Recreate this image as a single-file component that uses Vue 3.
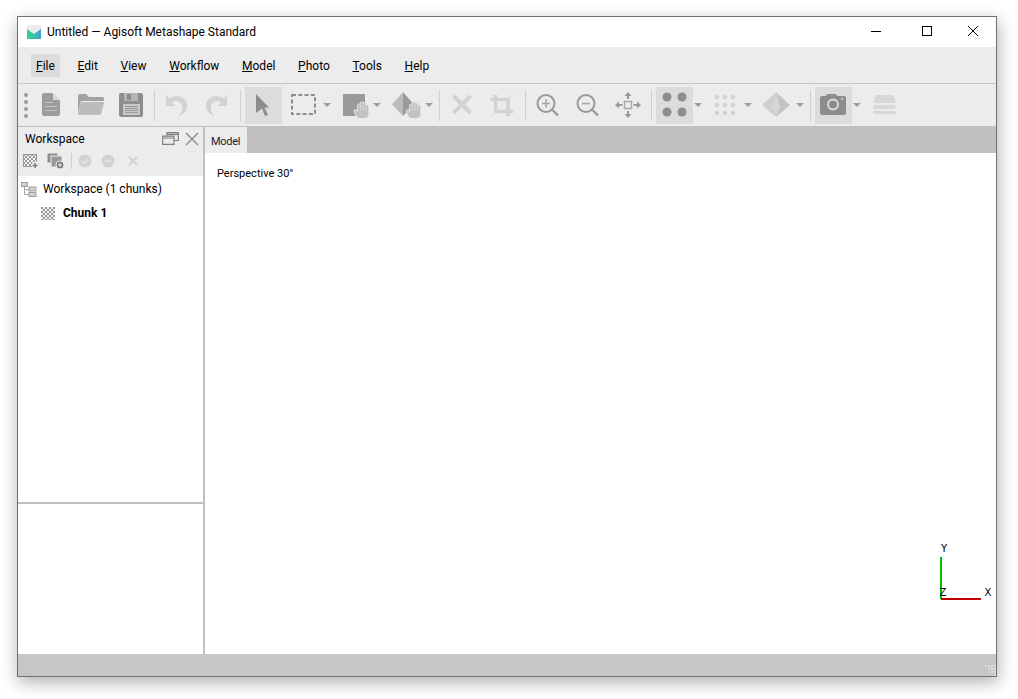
<script setup>
const menus = [
  { key: 'F', rest: 'ile' },
  { key: 'E', rest: 'dit' },
  { key: 'V', rest: 'iew' },
  { key: 'W', rest: 'orkflow' },
  { key: 'M', rest: 'odel' },
  { key: 'P', rest: 'hoto' },
  { key: 'T', rest: 'ools' },
  { key: 'H', rest: 'elp' }
]
const gridDots = []
for (const x of [11, 19, 27]) {
  for (const y of [10, 18, 26]) gridDots.push({ x, y })
}
const gripDots = [[11, 11], [8, 8], [11, 8], [5, 5], [8, 5], [11, 5], [2, 2], [5, 2], [8, 2], [11, 2]]
</script>

<template>
  <div class="page">
  <div class="window">
    <header class="titlebar">
      <svg class="logo" width="16" height="16" viewBox="0 0 16 16">
        <defs>
          <linearGradient id="lg" x1="0" x2="1" y1="0" y2="0">
            <stop offset="0" stop-color="#2fd08a" />
            <stop offset="0.55" stop-color="#38c0a8" />
            <stop offset="1" stop-color="#3f9fdc" />
          </linearGradient>
          <pattern id="chk" width="4" height="4" patternUnits="userSpaceOnUse">
            <rect width="4" height="4" fill="#f0f0f0" />
            <rect width="2" height="2" fill="#9a9a9a" />
            <rect x="2" y="2" width="2" height="2" fill="#9a9a9a" />
          </pattern>
        </defs>
        <rect x="1" y="1" width="14" height="14" fill="#ececec" />
        <path d="M1 5 L8 10 L15 5 V15 H1 Z" fill="url(#lg)" />
      </svg>
      <span class="title">Untitled — Agisoft Metashape Standard</span>
      <div class="controls">
        <svg width="46" height="30"><path d="M0 14.500H10" transform="translate(13 0)" stroke="#000" /></svg>
        <svg width="46" height="30"><rect x="18.500" y="9.500" width="9" height="9" fill="none" stroke="#000" /></svg>
        <svg width="46" height="30"><path d="M18 9L28 19M28 9L18 19" stroke="#000" /></svg>
      </div>
    </header>

    <nav class="menubar">
      <span v-for="(m, i) in menus" :key="m.key" class="menu" :class="{ hover: i === 0 }"><u>{{ m.key }}</u>{{ m.rest }}</span>
    </nav>

    <div class="toolbar">
      <div class="grip"><i></i><i></i><i></i><i></i></div>

      <div class="btn">
        <svg viewBox="0 0 37 37">
          <path d="M12 6H20L28 14V27a2 2 0 0 1-2 2H12a2 2 0 0 1-2-2V8a2 2 0 0 1 2-2Z" fill="#9c9c9c" />
          <path d="M21 6L28 13H21Z" fill="#d8d8d8" />
          <path d="M13 15.500H21M13 19.500H25M13 23.500H25" stroke="#c4c4c4" />
        </svg>
      </div>
      <div class="btn">
        <svg viewBox="0 0 37 37">
          <path d="M6 9a2 2 0 0 1 2-2H14L17 10H30a2 2 0 0 1 2 2V14H9L6 26Z" fill="#a2a2a2" />
          <path d="M9 15H31a1 1 0 0 1 1 1L29 27a1.500 1.500 0 0 1-1.500 1H7a1 1 0 0 1-1-1Z" fill="#bcbcbc" />
        </svg>
      </div>
      <div class="btn">
        <svg viewBox="0 0 37 37">
          <rect x="7" y="6" width="24" height="24" rx="2" fill="#8e8e8e" />
          <rect x="12" y="6" width="14" height="8" fill="#b4b4b4" />
          <rect x="15" y="7" width="4" height="6" fill="#8a8a8a" />
          <rect x="11" y="17" width="17" height="11" fill="#c8c8c8" />
          <path d="M13 19.500H26M13 21.500H26M13 23.500H26M13 25.500H26" stroke="#8e8e8e" stroke-width="0.800" />
        </svg>
      </div>
      <div class="sep"></div>
      <div class="btn">
        <svg viewBox="0 0 37 37">
          <path d="M9 8L9 19L19 19L15 15.500C18 13 22.500 14 24.500 17.500C26.500 21 25 25.500 21 29C27 27.500 30.500 23 30 18C29.500 12 24 8.500 19 9C16 9.300 14 10.500 12.500 11.500Z" fill="#d2d2d2" />
        </svg>
      </div>
      <div class="btn">
        <svg viewBox="0 0 37 37">
          <g transform="matrix(-1 0 0 1 39 0)">
            <path d="M9 8L9 19L19 19L15 15.500C18 13 22.500 14 24.500 17.500C26.500 21 25 25.500 21 29C27 27.500 30.500 23 30 18C29.500 12 24 8.500 19 9C16 9.300 14 10.500 12.500 11.500Z" fill="#d2d2d2" />
          </g>
        </svg>
      </div>
      <div class="sep wide"></div>
      <div class="btn active">
        <svg viewBox="0 0 37 37">
          <path d="M11 7L24 20.500H19.500L23 28L20 29L17 21.500L11 26Z" fill="#8c8c8c" />
        </svg>
      </div>
      <div class="btn">
        <svg viewBox="0 0 37 37">
          <rect x="7" y="8" width="23" height="19" fill="none" stroke="#8e8e8e" stroke-width="2" stroke-dasharray="4 2.300" />
        </svg>
      </div>
      <div class="drop"></div>
      <div class="btn">
        <svg viewBox="0 0 37 37">
          <rect x="8" y="7" width="22" height="22" fill="#9a9a9a" />
          <path class="hand" d="M23 31C21 28 20 26 19.500 24.500C19 23 21 22.500 22 24L23 25V18.500a1.300 1.300 0 0 1 2.600 0V16.500a1.300 1.300 0 0 1 2.600 0V17.500a1.300 1.300 0 0 1 2.600 0V19.500a1.300 1.300 0 0 1 2.600 0V27C33.400 29.500 32 31 30 31Z" />
          <path d="M25.600 18V24M28.200 18V24M30.800 19.500V24" stroke="#e4e4e4" stroke-width="0.700" />
        </svg>
      </div>
      <div class="drop extra"></div>
      <div class="btn">
        <svg viewBox="0 0 37 37">
          <path d="M16 5L5 17.500L16 29Z" fill="#bcbcbc" />
          <path d="M16 5L27 17.500L16 29Z" fill="#9a9a9a" />
          <path class="hand" d="M23 31C21 28 20 26 19.500 24.500C19 23 21 22.500 22 24L23 25V18.500a1.300 1.300 0 0 1 2.600 0V16.500a1.300 1.300 0 0 1 2.600 0V17.500a1.300 1.300 0 0 1 2.600 0V19.500a1.300 1.300 0 0 1 2.600 0V27C33.400 29.500 32 31 30 31Z" />
          <path d="M25.600 18V24M28.200 18V24M30.800 19.500V24" stroke="#e4e4e4" stroke-width="0.700" />
        </svg>
      </div>
      <div class="drop"></div>
      <div class="sep mid"></div>
      <div class="btn">
        <svg viewBox="0 0 37 37">
          <path d="M10.500 9L27.500 26M27.500 9L10.500 26" stroke="#d2d2d2" stroke-width="4" />
        </svg>
      </div>
      <div class="btn">
        <svg viewBox="0 0 37 37">
          <path d="M12.500 8V24.500H30M7.500 12.500H25V29" fill="none" stroke="#d2d2d2" stroke-width="3.500" />
          <path d="M8 29L30 7" stroke="#d8d8d8" stroke-width="0.800" />
        </svg>
      </div>
      <div class="sep"></div>
      <div class="btn">
        <svg viewBox="0 0 37 37">
          <circle cx="18" cy="16.500" r="8.500" fill="none" stroke="#999" stroke-width="2" />
          <path d="M24.500 23L30 28.500" stroke="#999" stroke-width="2.400" />
          <path d="M14 16.500H22M18 12.500V20.500" stroke="#a8a8a8" stroke-width="1.600" />
        </svg>
      </div>
      <div class="btn">
        <svg viewBox="0 0 37 37">
          <circle cx="18" cy="16.500" r="8.500" fill="none" stroke="#999" stroke-width="2" />
          <path d="M24.500 23L30 28.500" stroke="#999" stroke-width="2.400" />
          <path d="M14 16.500H22" stroke="#a8a8a8" stroke-width="1.600" />
        </svg>
      </div>
      <div class="btn">
        <svg viewBox="0 0 37 37">
          <g transform="translate(1 0)">
            <rect x="15.500" y="14.500" width="7" height="7" fill="none" stroke="#aaa" stroke-width="1.500" />
            <path d="M19 5L15.500 9H18V12H20V9H22.500ZM19 31L15.500 27H18V24H20V27H22.500ZM6 18L10 14.500V17H13.500V19H10V21.500ZM32 18L28 14.500V17H24.500V19H28V21.500Z" fill="#999" />
          </g>
        </svg>
      </div>
      <div class="sep wide"></div>
      <div class="btn active">
        <svg viewBox="0 0 37 37">
          <circle cx="11" cy="10" r="4.500" fill="#8e8e8e" />
          <circle cx="26" cy="10" r="4.500" fill="#8e8e8e" />
          <circle cx="11" cy="25" r="4.500" fill="#8e8e8e" />
          <circle cx="26" cy="25" r="4.500" fill="#8e8e8e" />
        </svg>
      </div>
      <div class="drop"></div>
      <div class="btn">
        <svg viewBox="0 0 37 37">
          <circle v-for="d in gridDots" :key="d.x + '-' + d.y" :cx="d.x" :cy="d.y" r="2.300" fill="#d2d2d2" />
        </svg>
      </div>
      <div class="drop extra"></div>
      <div class="btn">
        <svg viewBox="0 0 37 37">
          <path d="M18 5L4 18L18 30Z" fill="#cfcfcf" />
          <path d="M18 5L32 18L18 30Z" fill="#c4c4c4" />
          <path d="M18 5L14 20L18 30L22 20Z" fill="#d6d6d6" />
        </svg>
      </div>
      <div class="drop"></div>
      <div class="sep last"></div>
      <div class="btn active">
        <svg viewBox="0 0 37 37">
          <path d="M5 11a2 2 0 0 1 2-2H10.500L12.500 7H20.500L22.500 9H29a2 2 0 0 1 2 2V26a2 2 0 0 1-2 2H7a2 2 0 0 1-2-2Z" fill="#8c8c8c" />
          <circle cx="18" cy="17.500" r="5" fill="none" stroke="#e0e0e0" stroke-width="1.800" />
          <circle cx="27" cy="12" r="1" fill="#e0e0e0" />
        </svg>
      </div>
      <div class="drop"></div>
      <div class="btn">
        <svg viewBox="0 0 37 37">
          <path d="M11 8H28L31 16H8Z" fill="#d8d8d8" />
          <path d="M9 18H30L31 22H8Z" fill="#d8d8d8" />
          <path d="M8 24H31V27H8Z" fill="#d8d8d8" />
        </svg>
      </div>
    </div>

    <main class="main">
      <aside class="sidebar">
        <div class="workspace">
          <div class="panel-head">
            <div class="panel-title">
              <span>Workspace</span>
              <svg class="head-ico" width="17" height="13" viewBox="0 0 17 13">
                <path d="M5 3.500V0.700H16.300V8.500H12.500M0.700 4.200H12V12.300H0.700ZM0.700 6H12M5 2.300H16.300" fill="none" stroke="#808080" stroke-width="1.200" />
              </svg>
              <svg class="head-ico close" width="14" height="14" viewBox="0 0 14 14">
                <path d="M1 1L13 13M13 1L1 13" stroke="#8a8a8a" stroke-width="1.400" />
              </svg>
            </div>
            <div class="panel-tools">
              <svg width="16" height="15" viewBox="0 0 16 15">
                <rect x="0.500" y="0.500" width="13" height="12" fill="url(#chk)" stroke="#999" />
                <circle cx="12" cy="11" r="3.500" fill="#ececec" />
                <path d="M9.500 11.500H14.500M12 9V14" stroke="#777" stroke-width="1.400" />
              </svg>
              <svg class="tool2" width="17" height="16" viewBox="0 0 17 16">
                <rect x="0.500" y="0.500" width="10" height="9" fill="#8e8e8e" />
                <rect x="4" y="3" width="11" height="11" fill="#9a9a9a" stroke="#ececec" />
                <circle cx="13" cy="12" r="4" fill="#777" stroke="#ececec" />
                <path d="M11 12H15M13 10V14" stroke="#ececec" stroke-width="1.200" />
              </svg>
              <i class="tool-sep"></i>
              <svg class="tool3" width="14" height="14" viewBox="0 0 14 14">
                <circle cx="7" cy="7" r="6.500" fill="#d2d2d2" />
                <path d="M4 7L6.200 9.500L10 4.500" fill="none" stroke="#e6e6e6" stroke-width="1.300" />
              </svg>
              <svg class="tool4" width="14" height="14" viewBox="0 0 14 14">
                <circle cx="7" cy="7" r="6.500" fill="#d2d2d2" />
                <path d="M3.500 7H10.500" stroke="#e6e6e6" stroke-width="1.500" />
              </svg>
              <svg class="tool5" width="12" height="12" viewBox="0 0 12 12">
                <path d="M2 2L10 10M10 2L2 10" stroke="#d2d2d2" stroke-width="2.200" />
              </svg>
            </div>
          </div>
          <ul class="tree">
            <li class="node root">
              <svg width="16" height="15" viewBox="0 0 16 15">
                <path d="M3.500 4V12.500H8M3.500 7.500H8" fill="none" stroke="#a8a8a8" />
                <rect x="0.500" y="0.500" width="6" height="4" fill="#d0d0d0" stroke="#a0a0a0" />
                <rect x="8" y="5" width="7" height="4" fill="#d0d0d0" stroke="#a0a0a0" />
                <rect x="8" y="10.500" width="7" height="4" fill="#d0d0d0" stroke="#a0a0a0" />
              </svg>
              <span>Workspace (1 chunks)</span>
            </li>
            <li class="node chunk">
              <svg width="14" height="13" viewBox="0 0 14 13">
                <rect width="14" height="13" fill="url(#chk)" />
              </svg>
              <b>Chunk 1</b>
            </li>
          </ul>
        </div>
        <div class="lower"></div>
      </aside>

      <section class="view">
        <div class="tabs"><span class="tab">Model</span></div>
        <div class="canvas">
          <span class="persp">Perspective 30°</span>
          <svg class="axes" width="60" height="70" viewBox="0 0 60 70">
            <rect x="5" y="17" width="2" height="42" fill="#00c000" />
            <rect x="6" y="58" width="40" height="2" fill="#c00000" />
            <text x="9" y="12" class="ax">Y</text>
            <text x="8" y="56" class="ax">Z</text>
            <text x="53" y="56" class="ax">X</text>
          </svg>
        </div>
      </section>
    </main>

    <footer class="statusbar">
      <svg class="sizegrip" width="13" height="13" viewBox="0 0 13 13">
        <rect v-for="d in gripDots" :key="d[0] + '_' + d[1]" :x="d[0]" :y="d[1]" width="2" height="2" fill="#e0e0e0" />
      </svg>
    </footer>
  </div>
  </div>
</template>

<style scoped>
.page {
  height: 699px;
  padding: 16px 0 0 17px;
  box-sizing: border-box;
  overflow: hidden;
}
.window {
  box-sizing: border-box;
  width: 980px;
  height: 661px;
  border: 1px solid #707070;
  background: #fff;
  display: flex;
  flex-direction: column;
  box-shadow: 1px 5px 16px rgba(0, 0, 0, 0.32);
  font-family: Roboto, "Noto Sans", sans-serif;
  font-size: 12px;
  color: #000;
}
.titlebar {
  height: 30px;
  flex: none;
  display: flex;
  align-items: center;
  background: #fff;
}
.logo { margin-left: 8px; }
.title { margin-left: 5px; }
.controls { margin-left: auto; display: flex; margin-right: 0; }
.controls svg { display: block; }

.menubar {
  height: 37px;
  flex: none;
  box-sizing: border-box;
  background: #ececec;
  border-bottom: 1px solid #c6c6c6;
  display: flex;
  align-items: center;
  padding-left: 13px;
}
.menu {
  padding: 4px 5px 2px;
  height: 23px;
  box-sizing: border-box;
  line-height: 17px;
  margin-right: 12.700px;
}
.menu.hover { background: #dcdcdc; }

.toolbar {
  height: 42px;
  flex: none;
  box-sizing: border-box;
  background: #ececec;
  display: flex;
  align-items: center;
}
.grip {
  width: 14px;
  display: flex;
  flex-direction: column;
  gap: 3px;
  padding-left: 6px;
  box-sizing: border-box;
}
.grip i {
  width: 4px;
  height: 4px;
  border-radius: 50%;
  background: #9a9a9a;
}
.btn {
  width: 37px;
  height: 37px;
  margin-right: 3px;
  flex: none;
}
.btn svg { display: block; width: 37px; height: 37px; }
.btn.active { background: #dcdcdc; }
.hand {
  fill: #c2c2c2;
  stroke: #ececec;
  stroke-width: 1.500px;
  paint-order: stroke;
}
.sep {
  width: 1px;
  height: 31px;
  background: #cfcfcf;
  margin: 0 2px;
  flex: none;
}
.sep.wide { margin: 0 4px 0 3px; }
.sep.mid { margin: 0 3px 0 2px; }
.sep.last { margin: 0 4px 0 2px; }
.drop {
  width: 7px;
  height: 37px;
  margin-right: 3px;
  flex: none;
  position: relative;
}
.drop.extra { margin-right: 5px; }
.drop::after {
  content: "";
  position: absolute;
  left: -2px;
  top: 16px;
  border-left: 4px solid transparent;
  border-right: 4px solid transparent;
  border-top: 4px solid #9c9c9c;
}

.main {
  flex: 1;
  min-height: 0;
  display: flex;
  border-top: 1px solid #c0c0c0;
}
.sidebar {
  width: 187px;
  flex: none;
  box-sizing: border-box;
  border-right: 2px solid #c0c0c0;
  display: flex;
  flex-direction: column;
}
.workspace {
  height: 375px;
  flex: none;
  border-bottom: 2px solid #c0c0c0;
}
.lower { flex: 1; }
.panel-head {
  height: 49px;
  background: #ececec;
  box-sizing: border-box;
}
.panel-title {
  height: 23px;
  display: flex;
  align-items: center;
  padding-left: 7px;
  padding-right: 4px;
}
.head-ico { margin-left: auto; }
.head-ico.close { margin-left: 6px; }
.panel-tools {
  height: 22px;
  display: flex;
  align-items: center;
  padding-left: 5px;
}
.tool2 { margin-left: 8px; }
.tool-sep {
  width: 1px;
  height: 16px;
  background: #cfcfcf;
  margin-left: 7px;
}
.tool3 { margin-left: 6px; }
.tool4 { margin-left: 9px; }
.tool5 { margin-left: 12px; }

.tree {
  list-style: none;
  margin: 0;
  padding: 1px 0 0;
}
.node {
  display: flex;
  align-items: center;
  height: 24px;
}
.root { padding-left: 3px; }
.root span { margin-left: 6px; }
.chunk { padding-left: 23px; }
.chunk b { margin-left: 8px; }

.view {
  flex: 1;
  min-width: 0;
  display: flex;
  flex-direction: column;
}
.tabs {
  height: 26px;
  flex: none;
  background: #c0c0c0;
  display: flex;
}
.tab {
  width: 42px;
  box-sizing: border-box;
  padding-left: 6px;
  background: #ececec;
  color: #1a1a3a;
  font-size: 11px;
  letter-spacing: -0.300px;
  line-height: 29px;
}
.canvas {
  flex: 1;
  position: relative;
  background: #fff;
}
.persp {
  position: absolute;
  left: 12px;
  top: 14px;
  font-size: 11px;
}
.axes {
  position: absolute;
  left: 730px;
  top: 387px;
}
.ax {
  font-family: "DejaVu Sans", sans-serif;
  font-size: 10px;
  text-anchor: middle;
  fill: #000;
}
.statusbar {
  height: 22px;
  flex: none;
  background: #c6c6c6;
  position: relative;
}
.sizegrip {
  position: absolute;
  right: 0;
  bottom: 0;
}
</style>

<style>
html, body { background: #fff; }
</style>
